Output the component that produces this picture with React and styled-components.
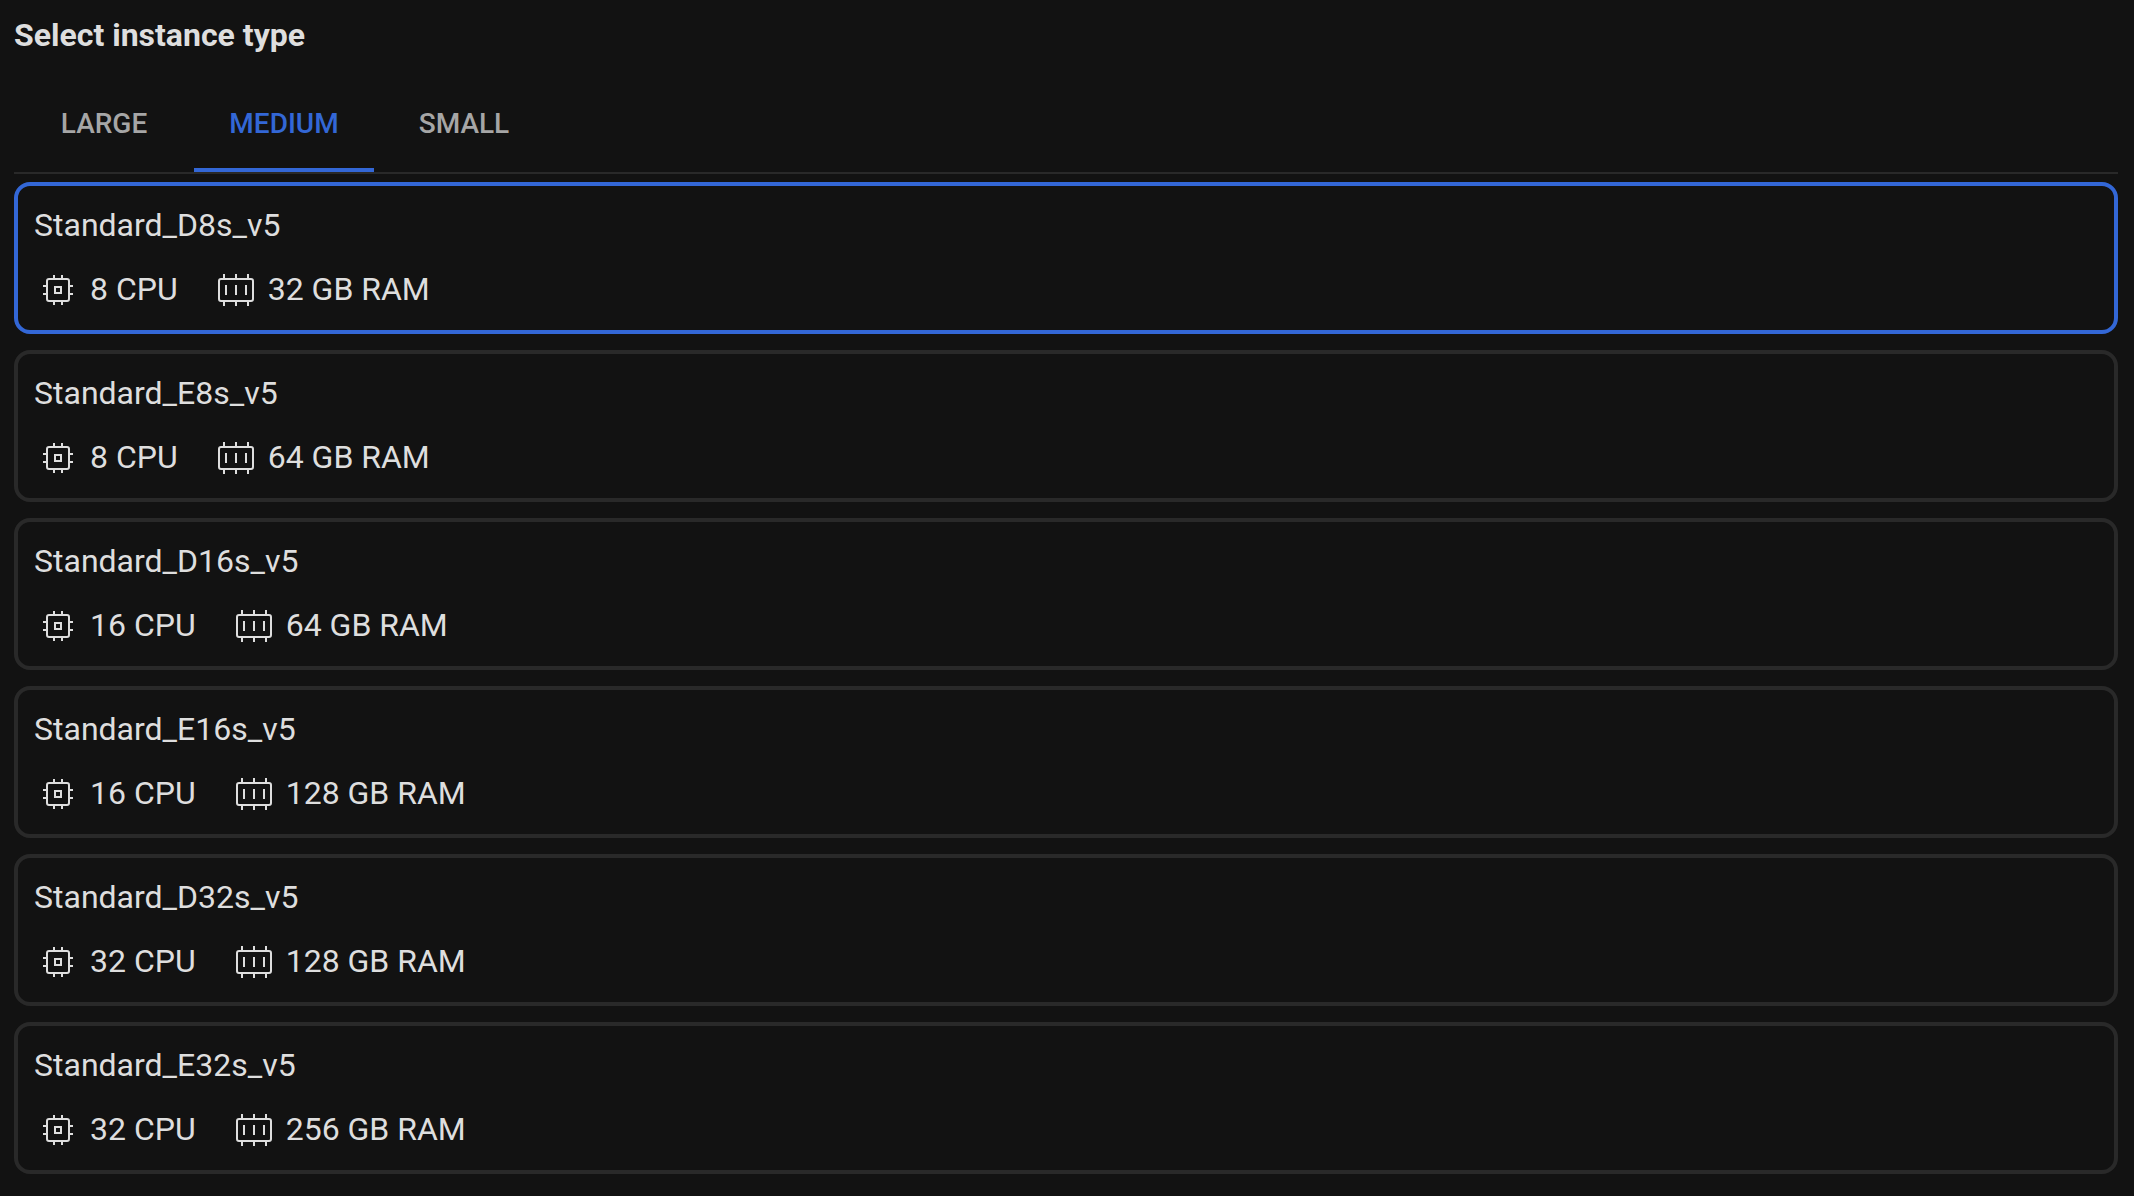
import React, { useState } from "react";
import styled, { createGlobalStyle } from "styled-components";

const GlobalStyle = createGlobalStyle`
  *, *::before, *::after { box-sizing: border-box; }
  body {
    margin: 0;
    min-height: 100vh;
    background: #121212;
    color: #dedede;
    font-family: Roboto, "Liberation Sans", sans-serif;
    font-size: 32px;
    line-height: 46px;
  }
  button { font: inherit; color: inherit; }
`;

const Page = styled.main`
  display: flex;
  flex-direction: column;
  padding: 12px 16px 16px 14px;
`;

const Title = styled.h1`
  margin: 0 0 18px;
  font-size: 32px;
  line-height: 46px;
  font-weight: 700;
`;

const TabBar = styled.div`
  display: flex;
  margin-bottom: 8px;
  border-bottom: 2px solid #292929;
`;

const Tab = styled.button`
  min-width: 180px;
  height: 96px;
  padding: 4px 32px 0;
  border: 0;
  border-bottom: 4px solid ${(p) => (p.$active ? "#3367d6" : "transparent")};
  background: none;
  color: ${(p) => (p.$active ? "#3367d6" : "#a6a6a6")};
  font-size: 28px;
  line-height: 36px;
  font-weight: 500;
  text-transform: uppercase;
  cursor: pointer;
`;

const Options = styled.div`
  display: flex;
  flex-direction: column;
  gap: 16px;
`;

const Card = styled.button`
  display: flex;
  flex-direction: column;
  align-items: flex-start;
  gap: 18px;
  padding: 16px;
  border: 4px solid ${(p) => (p.$selected ? "#3367d6" : "#292929")};
  border-radius: 16px;
  background: none;
  text-align: left;
  cursor: pointer;
`;

const Specs = styled.span`
  display: flex;
  gap: 34px;
`;

const Spec = styled.span`
  display: flex;
  align-items: flex-start;
  gap: 8px;
`;

const Icon = styled.svg`
  width: 48px;
  height: 48px;
  fill: none;
  stroke: currentColor;
  stroke-width: 2;
`;

const CpuIcon = () => (
  <Icon viewBox="0 0 48 48" aria-hidden="true">
    <rect x="13" y="13" width="22" height="22" rx="2" />
    <rect x="21" y="21" width="6" height="6" />
    <path d="M20 9v3M28 9v3M20 36v3M28 36v3M9 20h3M9 28h3M36 20h3M36 28h3" />
  </Icon>
);

const RamIcon = () => (
  <Icon viewBox="0 0 48 48" aria-hidden="true">
    <rect x="7" y="13" width="34" height="22" rx="2" />
    <path d="M12 8v4M24 8v4M36 8v4M12 36v4M24 36v4M36 36v4M14 19v10M24 19v10M34 19v10" />
  </Icon>
);

const sizes = ["Large", "Medium", "Small"];

const instances = [
  { name: "Standard_D8s_v5", cpu: 8, ram: 32 },
  { name: "Standard_E8s_v5", cpu: 8, ram: 64 },
  { name: "Standard_D16s_v5", cpu: 16, ram: 64 },
  { name: "Standard_E16s_v5", cpu: 16, ram: 128 },
  { name: "Standard_D32s_v5", cpu: 32, ram: 128 },
  { name: "Standard_E32s_v5", cpu: 32, ram: 256 },
];

export default function App() {
  const [size, setSize] = useState("Medium");
  const [selected, setSelected] = useState(instances[0].name);

  return (
    <>
      <GlobalStyle />
      <Page>
        <Title>Select instance type</Title>
        <TabBar role="tablist" aria-label="Instance size">
          {sizes.map((s) => (
            <Tab
              key={s}
              type="button"
              role="tab"
              aria-selected={s === size}
              $active={s === size}
              onClick={() => setSize(s)}
            >
              {s}
            </Tab>
          ))}
        </TabBar>
        <Options role="radiogroup" aria-label="Instance type">
          {instances.map(({ name, cpu, ram }) => (
            <Card
              key={name}
              type="button"
              role="radio"
              aria-checked={name === selected}
              $selected={name === selected}
              onClick={() => setSelected(name)}
            >
              <span>{name}</span>
              <Specs>
                <Spec>
                  <CpuIcon />
                  <span>{cpu} CPU</span>
                </Spec>
                <Spec>
                  <RamIcon />
                  <span>{ram} GB RAM</span>
                </Spec>
              </Specs>
            </Card>
          ))}
        </Options>
      </Page>
    </>
  );
}
